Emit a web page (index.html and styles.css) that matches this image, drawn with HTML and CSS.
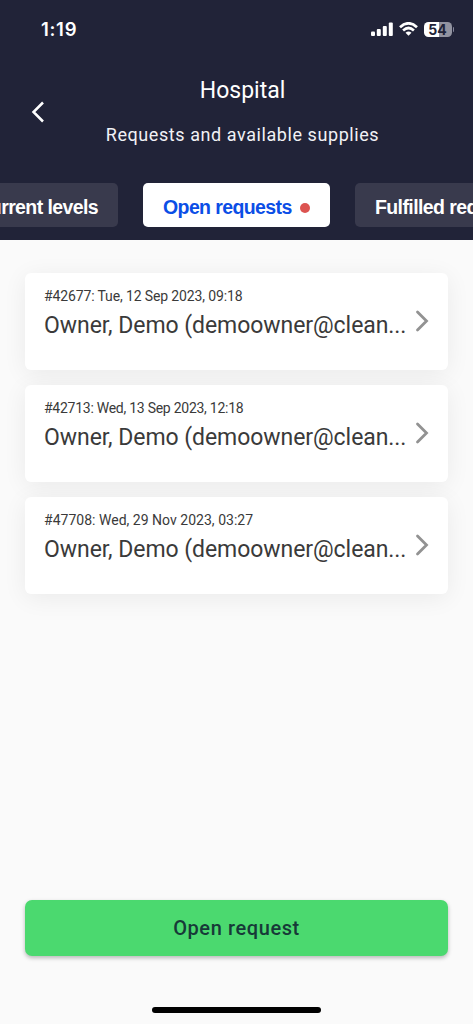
FILE: index.html
```html
<!DOCTYPE html>
<html lang="en">
<head>
<meta charset="utf-8">
<title>Hospital</title>
<link rel="stylesheet" href="styles.css">
</head>
<body>
<div class="screen">
  <header class="header">
    <div class="status">
      <span class="time">1:19</span>
      <div class="indicators">
        <svg class="signal" width="22" height="14" viewBox="0 0 22 14" fill="#fff"><rect x="0" y="9.5" width="4" height="4.5" rx="1"/><rect x="5.8" y="7" width="4" height="7" rx="1"/><rect x="11.8" y="4" width="4" height="10" rx="1"/><rect x="17.8" y="0.5" width="4" height="13.5" rx="1"/></svg>
        <svg class="wifi" width="19" height="14" viewBox="0 0 19 14" fill="none" stroke="#fff" stroke-width="2.7"><path d="M1 5.2Q9.5-2.6 18 5.2"/><path d="M4.1 8.4Q9.5 3.6 14.9 8.4"/><path d="M6.5 10.7Q9.5 8.2 12.5 10.7L9.5 13.7Z" fill="#fff" stroke="none"/></svg>
        <div class="battery"><span class="charge">54</span><i class="tip"></i></div>
      </div>
    </div>
    <div class="heading">
      <svg class="back" width="14" height="22" viewBox="0 0 14 22" fill="none" stroke="#fff" stroke-width="2.5"><path d="M12 1.5L2.5 11L12 20.5"/></svg>
      <div class="titles">
        <h1 class="title">Hospital</h1>
        <p class="subtitle">Requests and available supplies</p>
      </div>
    </div>
    <nav class="tabs">
      <span class="tab first"><span class="tab-text">Current levels</span></span>
      <span class="tab active"><span class="tab-text">Open requests</span><i class="dot"></i></span>
      <span class="tab last"><span class="tab-text">Fulfilled requests</span></span>
    </nav>
  </header>
  <main class="list">
    <article class="card">
      <div class="info"><p class="meta m1">#42677: Tue, 12 Sep 2023, 09:18</p><p class="owner">Owner, Demo (demoowner@clean...</p></div>
      <svg class="chevron" width="14" height="22" viewBox="0 0 14 22"><path d="M2.5 2L11.5 11L2.5 20"/></svg>
    </article>
    <article class="card">
      <div class="info"><p class="meta m2">#42713: Wed, 13 Sep 2023, 12:18</p><p class="owner">Owner, Demo (demoowner@clean...</p></div>
      <svg class="chevron" width="14" height="22" viewBox="0 0 14 22"><path d="M2.5 2L11.5 11L2.5 20"/></svg>
    </article>
    <article class="card">
      <div class="info"><p class="meta m3">#47708: Wed, 29 Nov 2023, 03:27</p><p class="owner">Owner, Demo (demoowner@clean...</p></div>
      <svg class="chevron" width="14" height="22" viewBox="0 0 14 22"><path d="M2.5 2L11.5 11L2.5 20"/></svg>
    </article>
  </main>
  <footer class="footer">
    <button class="cta">Open request</button>
    <div class="home"></div>
  </footer>
</div>
</body>
</html>
```
FILE: styles.css
```css
* { box-sizing: border-box; }
body { margin: 0; }
h1, p { margin: 0; font-weight: 400; }
.screen {
  width: 473px; height: 1024px; overflow: hidden;
  display: flex; flex-direction: column;
  background: #fafafa; font-family: Roboto, "Liberation Sans", sans-serif;
}
.header { height: 239.5px; flex: none; background: #212338; color: #fff; overflow: hidden; }
.status { height: 60px; padding: 0 19px 0 41px; display: flex; justify-content: space-between; }
.time { font: 600 18.5px/24px Inter, sans-serif; margin-top: 17px; letter-spacing: 0.7px; }
.indicators { display: flex; align-items: flex-start; padding-top: 22px; }
.signal { margin-right: 6px; }
.wifi { margin-right: 6px; }
.battery { display: flex; align-items: center; width: 30.5px; height: 15px; }
.charge {
  width: 28px; height: 15px; border-radius: 4.5px; text-align: center;
  background: linear-gradient(90deg, #fff 54%, #9293a0 54%);
  color: #212338; font: 700 14px/15.5px Inter, sans-serif;
}
.tip { width: 1.5px; height: 5px; margin-left: 1px; border-radius: 0 2px 2px 0; background: #85869a; }
.heading { height: 123px; display: flex; align-items: flex-start; padding-left: 31px; }
.back { margin-top: 41px; }
.titles { flex: 1; text-align: center; padding-right: 33px; }
.title { margin-top: 16px; font-size: 23px; line-height: 30px; letter-spacing: 0; }
.subtitle { margin-top: 17px; font-size: 18px; line-height: 24px; letter-spacing: 0.57px; color: #f1f1f5; }
.tabs { display: flex; gap: 25px; width: 640px; margin-left: -50px; }
.tab {
  flex: none; height: 44px; border-radius: 5px; background: #393a4d;
  display: flex; align-items: center; padding: 4px 20px 0;
  font: 700 19.5px/24px "Liberation Sans", sans-serif; letter-spacing: -0.6px; white-space: nowrap;
}
.first { width: 168px; justify-content: flex-end; }
.active { width: 187px; background: #fff; color: #0b4ee6; }
.last { width: 205px; }
.dot { flex: none; width: 10px; height: 10px; border-radius: 50%; background: #dc5350; margin-left: 8px; margin-top: 1px; }
.list { flex: 1; padding: 33px 25px 0; display: flex; flex-direction: column; gap: 15px; }
.card {
  height: 97px; flex: none; border-radius: 6px; background: #fff;
  box-shadow: 0 4px 24px rgba(0,0,0,.065);
  display: flex; align-items: flex-start; padding: 0 18px 0 19px; color: #3a3a3a;
}
.info { width: 371px; flex: none; white-space: nowrap; }
.meta { margin-top: 13px; font-size: 14px; line-height: 20px; }
.m1 { letter-spacing: -0.13px; }
.m2 { letter-spacing: -0.26px; }
.m3 { letter-spacing: 0.02px; }
.owner { margin-top: 6px; font-size: 23px; line-height: 28px; letter-spacing: -0.06px; }
.chevron { margin-top: 37px; fill: none; stroke: #929292; stroke-width: 2.8; stroke-linecap: round; }
.footer { height: 124px; flex: none; padding: 0 25px; display: flex; flex-direction: column; align-items: center; }
.cta {
  width: 423px; height: 56px; border: 0; border-radius: 7px; padding: 0;
  background: #4bd96f; color: #173a38; box-shadow: 0 2px 4px rgba(0,0,0,.27);
  font: 500 20px/56px Roboto, sans-serif; letter-spacing: 0.6px;
}
.home { width: 169px; height: 6px; margin-top: 51px; border-radius: 3px; background: #000; }
```
